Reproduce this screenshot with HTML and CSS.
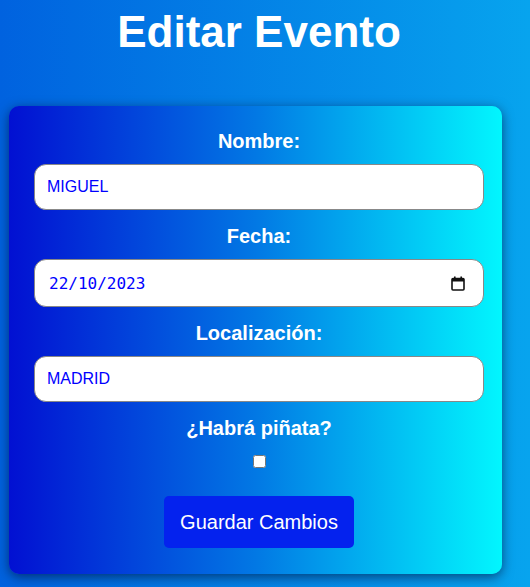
FILE: index.html
```html
<!DOCTYPE html>
<html lang="es">
<head>
<meta charset="utf-8">
<title>Editar Evento</title>
<link rel="stylesheet" href="styles.css">
</head>
<body>
<div class="page">
  <h1 class="title">Editar Evento</h1>
  <form class="card">
    <label class="field-label" for="nombre">Nombre:</label>
    <input class="field-input" id="nombre" type="text" value="MIGUEL">

    <label class="field-label" for="fecha">Fecha:</label>
    <div class="date-field">
      <input class="date-input" id="fecha" type="text" value="22/10/2023">
      <svg class="cal-icon" width="14" height="15" viewBox="0 0 14 15" aria-hidden="true">
        <rect x="1" y="2.5" width="12" height="11.5" rx="1" fill="none" stroke="#111" stroke-width="1.6"/>
        <rect x="1" y="2.5" width="12" height="3" fill="#111"/>
        <rect x="3" y="0.5" width="1.6" height="3" fill="#111"/>
        <rect x="9.4" y="0.5" width="1.6" height="3" fill="#111"/>
      </svg>
    </div>

    <label class="field-label" for="loc">Localización:</label>
    <input class="field-input" id="loc" type="text" value="MADRID">

    <label class="field-label" for="pinata">¿Habrá piñata?</label>
    <input class="check" id="pinata" type="checkbox">

    <button class="save-btn" type="button">Guardar Cambios</button>
  </form>
</div>
</body>
</html>
```

FILE: styles.css
```css
html, body {
  margin: 0;
  padding: 0;
}

body {
  min-height: 100vh;
  background: linear-gradient(90deg, #0062df 0%, #07a4ee 100%);
  font-family: "Liberation Sans", Arial, sans-serif;
}

.page {
  padding: 7px 28px 0 9px;
}

.title {
  margin: 0;
  padding-left: 7px;
  font-size: 44px;
  line-height: 50px;
  font-weight: bold;
  color: #fff;
  text-align: center;
}

.card {
  margin-top: 49px;
  display: flex;
  flex-direction: column;
  padding: 24px 18px 26px 25px;
  border-radius: 10px;
  background: linear-gradient(90deg, #0210d2 0%, #0278e4 50%, #02f6fe 100%);
  box-shadow: 0 3px 12px rgba(0, 0, 30, 0.55);
}

.field-label {
  display: block;
  margin-bottom: 11px;
  font-size: 20px;
  line-height: 23px;
  font-weight: bold;
  color: #fff;
  text-align: center;
}

.field-input,
.date-field {
  box-sizing: border-box;
  height: 46px;
  margin: 0 0 15px 0;
  border: 1px solid #888;
  border-radius: 12px;
  background: #fff;
}

.field-input {
  padding: 0 12px;
  font-family: "Liberation Sans", Arial, sans-serif;
  font-size: 16px;
  color: #0000ff;
  outline: none;
}

.date-field {
  height: 48px;
  display: flex;
  align-items: center;
  padding: 0 18px 0 14px;
}

.date-input {
  flex: 1;
  min-width: 0;
  border: none;
  padding: 0;
  margin: 0;
  background: transparent;
  font-family: "DejaVu Sans Mono", "Liberation Mono", monospace;
  font-size: 16px;
  color: #0000ff;
  outline: none;
}

.cal-icon {
  display: block;
  flex: none;
}

.check {
  align-self: center;
  width: 13px;
  height: 13px;
  margin: 4px 0 0 1px;
}

.save-btn {
  align-self: center;
  margin-top: 28px;
  height: 52px;
  padding: 0 16px;
  border: none;
  border-radius: 5px;
  background: #0422ee;
  color: #fff;
  font-family: "Liberation Sans", Arial, sans-serif;
  font-size: 20px;
}
```
